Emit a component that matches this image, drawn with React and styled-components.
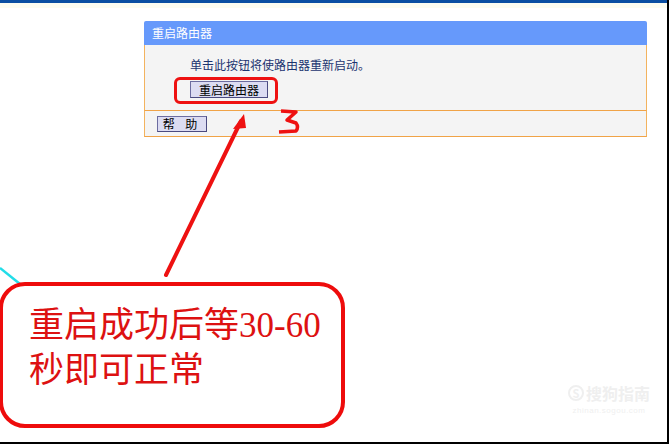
import React from "react";
import styled, { createGlobalStyle } from "styled-components";

const Global = createGlobalStyle`
  html, body { margin: 0; padding: 0; background: #fff; }
  body { font-family: "Noto Sans CJK SC", "Liberation Sans", sans-serif; }
`;

const Screen = styled.div`
  position: relative;
  width: 669px;
  height: 444px;
  box-sizing: border-box;
  background: #fff;
  border-right: 2px solid #000;
  border-bottom: 2px solid #000;
  overflow: hidden;
  display: flex;
  flex-direction: column;
`;

const TopBar = styled.div`
  height: 3px;
  background: #0b4ea2;
  flex: none;
`;

const Cream = styled.div`
  height: 5px;
  background: #fcfcf1;
  flex: none;
`;

const Content = styled.div`
  padding: 13px 0 0 144px;
`;

const Panel = styled.div`
  width: 503px;
  display: flex;
  flex-direction: column;
  font-size: 12px;
  line-height: 14px;
`;

const Header = styled.div`
  height: 24px;
  background: #6699fb;
  color: #fff;
  display: flex;
  align-items: center;
  padding-left: 8px;
  border-radius: 2px 2px 0 0;
`;

const Body = styled.div`
  height: 66px;
  box-sizing: border-box;
  background: #f4f4f4;
  border-left: 1px solid #f3b35e;
  border-right: 1px solid #f3b35e;
  border-bottom: 1px solid #f0a347;
  padding: 13px 0 0 45px;
  display: flex;
  flex-direction: column;
  align-items: flex-start;
  gap: 9px;
`;

const Notice = styled.div`
  color: #1c3470;
`;

const Btn = styled.button`
  font-family: "Noto Sans CJK SC", sans-serif;
  font-size: 12px;
  line-height: 14px;
  height: ${(p) => p.$h}px;
  width: ${(p) => p.$w}px;
  padding: 0;
  margin: 0;
  background: #dcdcf2;
  border: 1px solid #6c6ca0;
  border-right-color: #4a4a80;
  border-bottom-color: #4a4a80;
  color: #000;
  letter-spacing: ${(p) => p.$ls || 0}px;
`;

const Footer = styled.div`
  height: 26px;
  box-sizing: border-box;
  background: #f4f4f4;
  border-left: 1px solid #f3b35e;
  border-right: 1px solid #f3b35e;
  border-bottom: 1px solid #f0a347;
  padding-left: 12px;
  display: flex;
  align-items: center;
`;

const RedRing = styled.div`
  position: absolute;
  left: 174px;
  top: 77px;
  width: 104px;
  height: 27px;
  box-sizing: border-box;
  border: 3px solid #ee1111;
  border-radius: 6px;
`;

const Overlay = styled.svg`
  position: absolute;
  left: 0;
  top: 0;
  pointer-events: none;
`;

const Callout = styled.div`
  position: absolute;
  left: -1px;
  top: 282px;
  width: 346px;
  height: 146px;
  box-sizing: border-box;
  border: 4px solid #ee0c0c;
  border-radius: 26px;
  background: #fff;
  padding: 17px 0 0 26px;
  color: #dd1111;
  font-family: "Liberation Serif", "Noto Sans CJK SC", serif;
  font-size: 35px;
  line-height: 45px;
  font-weight: 400;
`;

const Watermark = styled.div`
  position: absolute;
  left: 568px;
  top: 383px;
  color: #efefef;
  display: flex;
  flex-direction: column;
  align-items: center;
  gap: 3px;
  font-family: "Noto Sans CJK SC", sans-serif;
`;

const WmTop = styled.div`
  font-size: 16px;
  line-height: 20px;
  font-weight: 700;
  display: flex;
  align-items: center;
  gap: 2px;
`;

const WmLogo = styled.span`
  display: inline-flex;
  width: 16px;
  height: 16px;
  border-radius: 50%;
  border: 2px solid #efefef;
  box-sizing: border-box;
  align-items: center;
  justify-content: center;
  font-size: 11px;
  line-height: 1;
`;

const WmSub = styled.div`
  font-size: 8px;
  line-height: 9px;
  letter-spacing: 0.5px;
  font-family: "Liberation Sans", sans-serif;
`;

export default function App() {
  return (
    <>
      <Global />
      <Screen>
        <TopBar />
        <Cream />
        <Content>
          <Panel>
            <Header>重启路由器</Header>
            <Body>
              <Notice>单击此按钮将使路由器重新启动。</Notice>
              <Btn $w={78} $h={17}>重启路由器</Btn>
            </Body>
            <Footer>
              <Btn $w={50} $h={16} $ls={4}>帮 助</Btn>
            </Footer>
          </Panel>
        </Content>
        <RedRing />
        <Overlay width="669" height="444" viewBox="0 0 669 444">
          <line x1="0" y1="268" x2="20" y2="284" stroke="#22dde8" strokeWidth="2.5" />
          <line x1="166" y1="275" x2="241" y2="121" stroke="#ee1111" strokeWidth="4" strokeLinecap="round" />
          <polygon points="244,114 233,129 246,128" fill="#ee1111" />
          <path
            d="M281 111 L296 112 L287 120 L296 123 Q299 127 296 131 L279 132"
            fill="none"
            stroke="#ee1111"
            strokeWidth="3.5"
            strokeLinejoin="round"
          />
        </Overlay>
        <Callout>
          重启成功后等30-60
          <br />
          秒即可正常
        </Callout>
        <Watermark>
          <WmTop>
            <WmLogo>S</WmLogo>搜狗指南
          </WmTop>
          <WmSub>zhinan.sogou.com</WmSub>
        </Watermark>
      </Screen>
    </>
  );
}
